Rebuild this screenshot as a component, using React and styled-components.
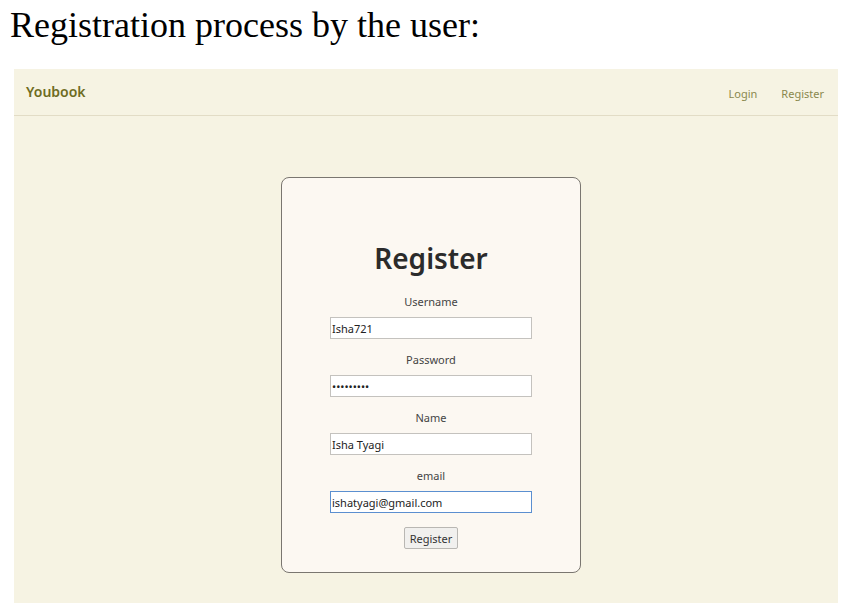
import React from "react";
import styled, { createGlobalStyle } from "styled-components";

const Global = createGlobalStyle`
  html, body { margin: 0; padding: 0; background: #ffffff; }
  body { font-family: "Noto Sans", "Open Sans", sans-serif; }
`;

const Page = styled.div`
  width: 857px;
  height: 613px;
  display: flex;
  flex-direction: column;
  overflow: hidden;
`;

const Caption = styled.h1`
  margin: 5px 0 0 10px;
  font-family: "Liberation Serif", "Times New Roman", serif;
  font-weight: 400;
  font-size: 36px;
  line-height: 40px;
  color: #000;
`;

const Frame = styled.div`
  margin: 24px 19px 0 14px;
  height: 534px;
  background: #f6f3e3;
  display: flex;
  flex-direction: column;
`;

const NavBar = styled.nav`
  height: 46px;
  border-bottom: 1px solid #e2dcc6;
  display: flex;
  align-items: center;
  justify-content: space-between;
  padding: 0 14px 0 12px;
`;

const Brand = styled.span`
  font-size: 14px;
  font-weight: 600;
  color: #6e6c22;
  margin-top: -1px;
`;

const NavLinks = styled.div`
  display: flex;
  gap: 24px;
  margin-top: 2px;
`;

const NavLink = styled.a`
  font-size: 11px;
  color: #8a884e;
  text-decoration: none;
`;

const Main = styled.main`
  flex: 1;
  display: flex;
  justify-content: center;
  padding-top: 61px;
  padding-left: 10px;
`;

const Card = styled.form`
  width: 300px;
  height: 396px;
  box-sizing: border-box;
  border: 1px solid #7a7670;
  border-radius: 8px;
  background: #fcf8f2;
  display: flex;
  flex-direction: column;
  align-items: center;
  padding-top: 62px;
`;

const Heading = styled.h2`
  margin: 0 0 18px;
  font-size: 28px;
  line-height: 36px;
  font-weight: 600;
  color: #2b2b2b;
`;

const Field = styled.div`
  display: flex;
  flex-direction: column;
  align-items: center;
  gap: 7px;
  margin-bottom: 13px;
`;

const Label = styled.label`
  font-size: 11px;
  line-height: 16px;
  color: #444;
`;

const Input = styled.input`
  width: 202px;
  height: 22px;
  box-sizing: border-box;
  border: 1px solid ${(p) => (p.$focused ? "#5b8fd0" : "#c4c2be")};
  background: #fff;
  padding: 0 1px;
  font-family: "Noto Sans", "Open Sans", sans-serif;
  font-size: 11px;
  color: #222;
  outline: none;
`;

const Button = styled.button`
  margin-top: 1px;
  height: 22px;
  padding: 0 5px;
  border: 1px solid #b9b7b3;
  border-radius: 2px;
  background: #f1f0ee;
  font-family: "Noto Sans", "Open Sans", sans-serif;
  font-size: 11px;
  color: #333;
`;

const fields = [
  { label: "Username", type: "text", value: "Isha721" },
  { label: "Password", type: "password", value: "isha12345" },
  { label: "Name", type: "text", value: "Isha Tyagi" },
  { label: "email", type: "text", value: "ishatyagi@gmail.com", focused: true },
];

export default function App() {
  return (
    <Page>
      <Global />
      <Caption>Registration process by the user:</Caption>
      <Frame>
        <NavBar>
          <Brand>Youbook</Brand>
          <NavLinks>
            <NavLink href="#">Login</NavLink>
            <NavLink href="#">Register</NavLink>
          </NavLinks>
        </NavBar>
        <Main>
          <Card onSubmit={(e) => e.preventDefault()}>
            <Heading>Register</Heading>
            {fields.map((f) => (
              <Field key={f.label}>
                <Label>{f.label}</Label>
                <Input
                  type={f.type}
                  defaultValue={f.value}
                  $focused={f.focused}
                  readOnly
                />
              </Field>
            ))}
            <Button type="submit">Register</Button>
          </Card>
        </Main>
      </Frame>
    </Page>
  );
}
